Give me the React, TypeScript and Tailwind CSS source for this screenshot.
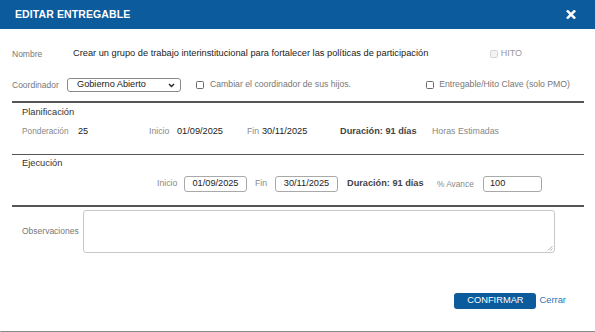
import React from "react";

const font = { fontFamily: '"Liberation Sans", Arial, sans-serif' };

function Check({ disabled = false }: { disabled?: boolean }) {
  return (
    <span
      className={`inline-block w-[8px] h-[8px] rounded-[1.5px] border ${
        disabled ? "border-[#d4d4d4] bg-[#f3f3f3]" : "border-[#6b6b6b] bg-white"
      }`}
    />
  );
}

function Field({ value, className }: { value: string; className: string }) {
  return (
    <div
      className={`h-[16px] border border-[#a9a9a9] rounded-[3px] flex items-center text-[9.2px] text-[#222] ${className}`}
    >
      {value}
    </div>
  );
}

export default function App() {
  return (
    <div className="w-[595px] h-[332px] bg-white relative overflow-hidden" style={font}>
      {/* Header */}
      <div className="h-[29px] bg-[#0b5b9d] flex items-center justify-between pl-[15px] pr-[19px]">
        <span className="text-white font-bold text-[10.5px] tracking-[0.1px]">EDITAR ENTREGABLE</span>
        <svg width="10" height="9" viewBox="0 0 10 9">
          <path d="M1.8 1.3 L8.2 7.7 M8.2 1.3 L1.8 7.7" stroke="white" strokeWidth="2.5" strokeLinecap="square" />
        </svg>
      </div>

      <div className="pl-[12px] pr-[11px]">
        {/* Nombre */}
        <div className="mt-[18px] h-[14px] flex items-center">
          <span className="w-[61px] text-[8.5px] text-[#777]">Nombre</span>
          <span className="text-[9.25px] text-[#222]">
            Crear un grupo de trabajo interinstitucional para fortalecer las políticas de participación
          </span>
          <span className="ml-auto mr-[62px] flex items-center gap-[3px]">
            <Check disabled />
            <span className="text-[9px] text-[#999]">HITO</span>
          </span>
        </div>

        {/* Coordinador */}
        <div className="mt-[16px] h-[16px] flex items-center">
          <span className="w-[55px] text-[8.5px] text-[#777]">Coordinador</span>
          <div className="w-[114px] h-[14px] border border-[#8a8a8a] rounded-[3px] flex items-center pl-[9px] pr-[5px] text-[9.2px] text-[#222]">
            <span>Gobierno Abierto</span>
            <svg className="ml-auto" width="7" height="5" viewBox="0 0 7 5">
              <path d="M1 1 L3.5 3.5 L6 1" fill="none" stroke="#222" strokeWidth="1.4" />
            </svg>
          </div>
          <span className="ml-[15px] flex items-center gap-[6px]">
            <Check />
            <span className="text-[8.7px] text-[#777]">Cambiar el coordinador de sus hijos.</span>
          </span>
          <span className="ml-auto mr-[14px] flex items-center gap-[5px]">
            <Check />
            <span className="text-[8.7px] text-[#777]">Entregable/Hito Clave (solo PMO)</span>
          </span>
        </div>

        <div className="mt-[8px] h-[1.5px] bg-[#555]" />

        {/* Planificación */}
        <div className="pl-[10px]">
          <div className="mt-[4px] h-[12px] flex items-center text-[9.3px] text-[#333]">Planificación</div>
          <div className="mt-[6px] h-[14px] flex items-center">
            <span className="w-[56px] text-[8.3px] text-[#888]">Ponderación</span>
            <span className="w-[71px] text-[9.2px] text-[#222]">25</span>
            <span className="w-[28px] text-[8.7px] text-[#888]">Inicio</span>
            <span className="w-[70px] text-[9.2px] text-[#222]">01/09/2025</span>
            <span className="w-[15px] text-[8.7px] text-[#888]">Fin</span>
            <span className="w-[78px] text-[9.2px] text-[#222]">30/11/2025</span>
            <span className="w-[92px] text-[9.2px] font-bold text-[#444]">Duración: 91 días</span>
            <span className="text-[8.8px] text-[#888]">Horas Estimadas</span>
          </div>
        </div>

        <div className="mt-[15px] h-[1.5px] bg-[#555]" />

        {/* Ejecución */}
        <div className="pl-[10px]">
          <div className="mt-[3px] h-[12px] flex items-center text-[9.3px] text-[#333]">Ejecución</div>
          <div className="mt-[6px] h-[16px] flex items-center">
            <span className="ml-[135px] w-[27px] text-[8.7px] text-[#888]">Inicio</span>
            <Field value="01/09/2025" className="w-[63px] justify-center" />
            <span className="ml-[8px] w-[20px] text-[8.7px] text-[#888]">Fin</span>
            <Field value="30/11/2025" className="w-[63px] justify-center" />
            <span className="ml-[9px] w-[90px] text-[9.2px] font-bold text-[#444]">Duración: 91 días</span>
            <span className="w-[46px] text-[8.3px] text-[#888]">% Avance</span>
            <Field value="100" className="w-[59px] pl-[6px]" />
          </div>
        </div>

        <div className="mt-[13px] h-[1.5px] bg-[#555]" />

        {/* Observaciones */}
        <div className="mt-[3px] flex items-center pl-[10px]">
          <span className="w-[61px] text-[8.5px] text-[#777]">Observaciones</span>
          <div className="relative w-[472px] h-[43px] border border-[#c8c8c8] rounded-[3px]">
            <svg className="absolute right-[1px] bottom-[1px]" width="6" height="6" viewBox="0 0 6 6">
              <path d="M5.5 1 L1 5.5 M5.5 3.5 L3.5 5.5" stroke="#999" strokeWidth="0.8" />
            </svg>
          </div>
        </div>

        {/* Buttons */}
        <div className="mt-[40px] flex items-center justify-end pr-[18px]">
          <button className="w-[82px] h-[16px] bg-[#0b5b9d] rounded-[3px] text-white text-[9.3px] flex items-center justify-center">
            CONFIRMAR
          </button>
          <span className="ml-[3px] text-[9.4px] text-[#2c73b8]">Cerrar</span>
        </div>
      </div>

      <div className="absolute left-0 right-0 bottom-0 h-[1.5px] bg-[#8a8a8a] rounded-bl-[3px]" />
    </div>
  );
}
